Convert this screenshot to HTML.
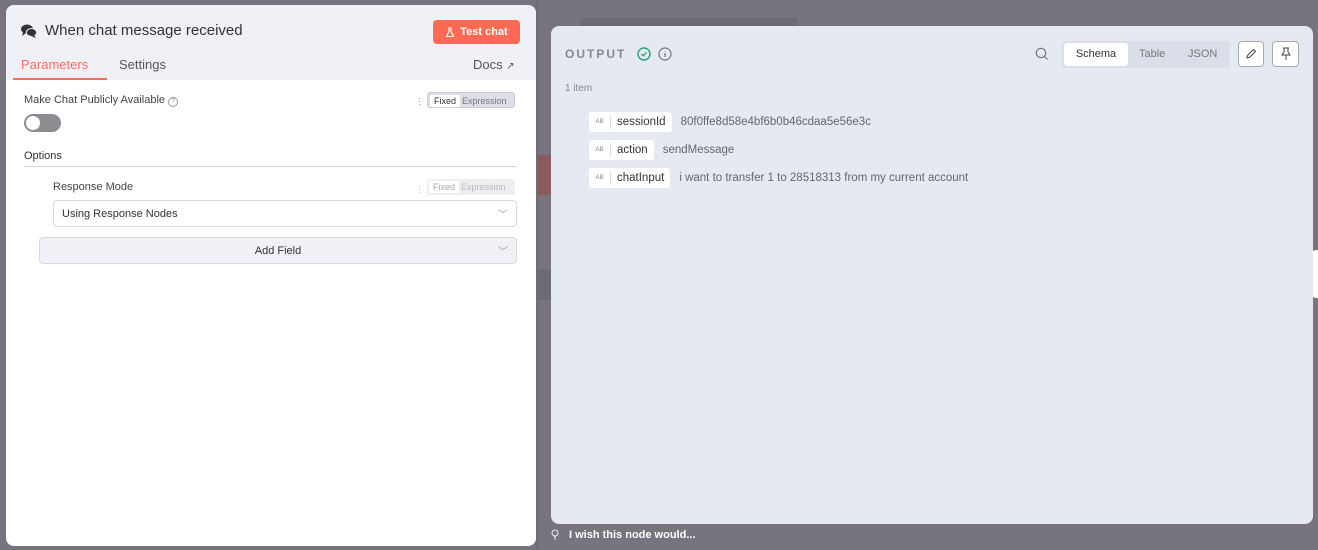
<!DOCTYPE html>
<html><head><meta charset="utf-8"><style>
*{box-sizing:border-box;margin:0;padding:0}
body{width:1318px;height:550px;overflow:hidden;background:#77747e;font-family:"Liberation Sans",sans-serif;position:relative}
.left{position:absolute;left:6px;top:5px;width:530px;height:541px;background:#fff;border-radius:8px;overflow:hidden}
.lhead{background:#f0f1f6;height:75px;position:relative}
.title{position:absolute;left:15px;top:17px;font-size:15px;color:#333;display:flex;align-items:center;gap:8px}
.test{position:absolute;left:427px;top:15px;width:87px;height:24px;background:#fe6a53;border-radius:4px;color:#fff;font-size:11px;font-weight:bold;display:flex;align-items:center;justify-content:center;gap:5px}
.tab{position:absolute;top:52px;font-size:13px}
.ul{position:absolute;left:8px;top:73px;width:94px;height:2px;background:#ff6d5a}
.lab{position:absolute;font-size:11px;color:#444}
.fx{position:absolute;width:88px;height:16px;background:#dcdfe7;border-radius:3px;font-size:9px;color:#777}
.fx span{position:absolute;top:2px;height:12px;line-height:12px}
.fx .f{left:2px;width:30px;background:#fff;border-radius:2px;text-align:center;color:#333}
.fx .e{left:34px}
.dots{position:absolute;width:2px;font-size:10px;color:#888;line-height:3px}
.right{position:absolute;left:551px;top:26px;width:762px;height:498px;background:#e5e9f2;border-radius:8px}
.row{position:absolute;left:38px;height:20px;display:flex;align-items:center}
.pill{background:#fff;border-radius:3px;height:20px;display:flex;align-items:center;font-size:11.5px;color:#333;padding-right:6px}
.pill i{font-style:normal;font-size:6px;color:#888;width:22px;text-align:center;border-right:1px solid #ddd;height:14px;line-height:14px;margin-right:6px}
.val{font-size:11.5px;color:#666;margin-left:9px}
</style></head><body>
<div style="position:absolute;left:580px;top:18px;width:218px;height:10px;background:#6c6a75;border-radius:4px"></div>
<div style="position:absolute;left:536px;top:155px;width:15px;height:40px;background:#8a5a5e"></div>
<div style="position:absolute;left:536px;top:270px;width:15px;height:30px;background:#6c6a75"></div>
<div style="position:absolute;left:1312px;top:250px;width:6px;height:48px;background:#fff;border-radius:4px 0 0 4px"></div>
<div style="position:absolute;left:536px;top:0;width:2px;height:550px;background:#6f6c77"></div>

<div class="left">
 <div class="lhead">
  <div class="title"><svg width="16" height="14" viewBox="0 0 16 14"><ellipse cx="6" cy="5" rx="6" ry="4.5" fill="#333"/><path d="M2 8 L1 12 L5 9Z" fill="#333"/><ellipse cx="10.5" cy="8.5" rx="5.2" ry="4" fill="#333" stroke="#f0f1f6" stroke-width="1"/><path d="M13 11 L15 14 L10 12Z" fill="#333"/></svg>When chat message received</div>
  <div class="test"><svg width="10" height="11" viewBox="0 0 10 11"><path d="M3.5 1h3M4 1v3.5L1.5 9.5h7L6 4.5V1" fill="none" stroke="#fff" stroke-width="1.1"/></svg>Test chat</div>
  <div class="tab" style="left:15px;color:#ff6d5a">Parameters</div>
  <div class="tab" style="left:113px;color:#555">Settings</div>
  <div class="tab" style="left:467px;color:#555">Docs <span style="font-size:10px">↗</span></div>
  <div class="ul" style="left:7px"></div>
 </div>
 <div class="lab" style="left:18px;top:89px">Make Chat Publicly Available <span style="display:inline-block;width:10px;height:10px;border:1px solid #999;border-radius:50%;font-size:7px;text-align:center;line-height:8px;color:#999">?</span></div>
 <div class="dots" style="left:412px;top:92px">·<br>·<br>·</div>
 <div class="fx" style="left:421px;top:87px;border:1px solid #c8ccd6"><span class="f">Fixed</span><span class="e">Expression</span></div>
 <div style="position:absolute;left:18px;top:109px;width:37px;height:18px;background:#8d8c91;border-radius:9px"><div style="position:absolute;left:2px;top:2px;width:14px;height:14px;border-radius:50%;background:#fff"></div></div>
 <div class="lab" style="left:18px;top:145px;font-size:11px;color:#333">Options</div>
 <div style="position:absolute;left:18px;top:161px;width:493px;height:1px;background:#d0d4dc"></div>
 <div class="lab" style="left:47px;top:176px">Response Mode</div>
 <div class="dots" style="left:412px;top:180px;color:#bbb">·<br>·<br>·</div>
 <div class="fx" style="left:421px;top:174px;background:#eceef2;color:#bbb"><span class="f" style="color:#aaa">Fixed</span><span class="e">Expression</span></div>
 <div style="position:absolute;left:47px;top:195px;width:464px;height:27px;border:1px solid #d6d9e0;border-radius:4px;font-size:11px;color:#333;padding:7px 8px">Using Response Nodes<span style="position:absolute;right:8px;top:5px;color:#999;font-size:10px">﹀</span></div>
 <div style="position:absolute;left:33px;top:232px;width:478px;height:27px;border:1px solid #d6d9e0;border-radius:4px;background:#f0f1f6;font-size:11px;color:#333;text-align:center;padding-top:7px">Add Field<span style="position:absolute;right:8px;top:5px;color:#999;font-size:10px">﹀</span></div>
</div>

<div class="right">
 <div style="position:absolute;left:14px;top:21px;font-size:12px;font-weight:bold;letter-spacing:2px;color:#888">OUTPUT</div>
 <svg style="position:absolute;left:86px;top:21px" width="14" height="14" viewBox="0 0 14 14"><circle cx="7" cy="7" r="6" fill="none" stroke="#20a86a" stroke-width="1.4"/><path d="M4.5 7.2l1.7 1.6 3.2-3.3" fill="none" stroke="#20a86a" stroke-width="1.3"/></svg>
 <svg style="position:absolute;left:107px;top:21px" width="14" height="14" viewBox="0 0 14 14"><circle cx="7" cy="7" r="6" fill="none" stroke="#777" stroke-width="1.2"/><path d="M7 6v4M7 4v.5" stroke="#777" stroke-width="1.3"/></svg>
 <div style="position:absolute;left:14px;top:57px;font-size:10px;color:#888">1 item</div>
 <div class="row" style="top:86px"><div class="pill"><i>AB</i>sessionId</div><span class="val">80f0ffe8d58e4bf6b0b46cdaa5e56e3c</span></div>
 <div class="row" style="top:114px"><div class="pill"><i>AB</i>action</div><span class="val">sendMessage</span></div>
 <div class="row" style="top:142px"><div class="pill"><i>AB</i>chatInput</div><span class="val">i want to transfer 1 to 28518313 from my current account</span></div>
 <svg style="position:absolute;left:484px;top:21px" width="14" height="14" viewBox="0 0 14 14"><circle cx="6" cy="6" r="4.7" fill="none" stroke="#777" stroke-width="1.2"/><path d="M9.5 9.5l3 3" stroke="#777" stroke-width="1.2"/></svg>
 <div style="position:absolute;left:511px;top:15px;width:168px;height:27px;background:#dadee8;border-radius:4px;font-size:11px">
  <div style="position:absolute;left:2px;top:2px;width:64px;height:23px;background:#fff;border-radius:3px;color:#333;text-align:center;line-height:23px">Schema</div>
  <div style="position:absolute;left:77px;top:2px;line-height:23px;color:#777">Table</div>
  <div style="position:absolute;left:126px;top:2px;line-height:23px;color:#777">JSON</div>
 </div>
 <div style="position:absolute;left:687px;top:15px;width:26px;height:26px;border:1px solid #aaa;border-radius:4px;background:#fff"><svg style="position:absolute;left:6px;top:6px" width="12" height="12" viewBox="0 0 12 12"><path d="M2 10l.5-2.5L8.5 1.5l2 2-6 6z" fill="none" stroke="#444" stroke-width="1"/></svg></div>
 <div style="position:absolute;left:721px;top:15px;width:27px;height:26px;border:1px solid #aaa;border-radius:4px;background:#fff"><svg style="position:absolute;left:7px;top:5px" width="12" height="14" viewBox="0 0 12 14"><path d="M3 1h6M4 1v4L2 8h8L8 5V1M6 8v5" fill="none" stroke="#444" stroke-width="1"/></svg></div>
</div>

<svg style="position:absolute;left:551px;top:529px" width="8" height="12" viewBox="0 0 8 12"><circle cx="4" cy="4" r="3" fill="none" stroke="#eee" stroke-width="1"/><path d="M3 8h2M3 10h2" stroke="#eee"/></svg>
<div style="position:absolute;left:569px;top:529px;font-size:11px;font-weight:bold;color:#fff">I wish this node would...</div>
</body></html>
